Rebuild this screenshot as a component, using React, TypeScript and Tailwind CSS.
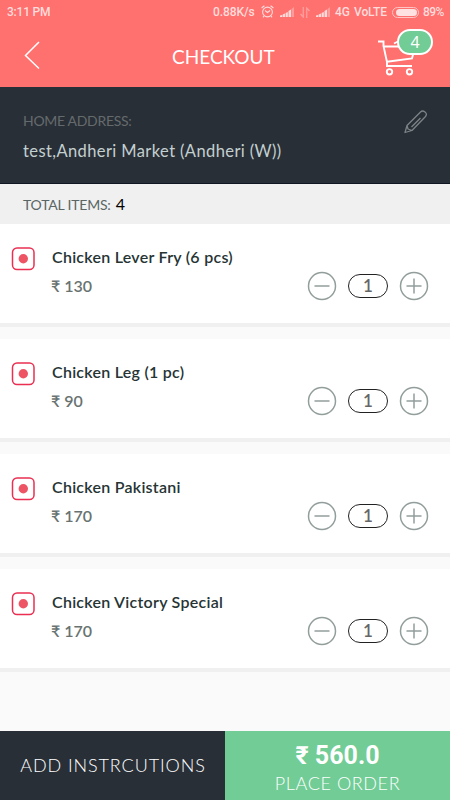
import { ReactNode } from 'react';

type Item = { id: number; name: string; price: number; qty: number };

const items: Item[] = [
  { id: 1, name: 'Chicken Lever Fry (6 pcs)', price: 130, qty: 1 },
  { id: 2, name: 'Chicken Leg (1 pc)', price: 90, qty: 1 },
  { id: 3, name: 'Chicken Pakistani', price: 170, qty: 1 },
  { id: 4, name: 'Chicken Victory Special', price: 170, qty: 1 },
];

function Signal() {
  return (
    <svg width="14" height="10" viewBox="0 0 14 10" fill="currentColor">
      <path d="M0 10V8.5L2.2 8v2zM2.7 10V7.5L5 6.5V10zM5.6 10V6l2.2-1v5zM8.5 10V4L11 2.5V10z" />
      <path d="M11.5 10V2L14 0v10z" opacity="0.4" />
    </svg>
  );
}

function StatusBar() {
  return (
    <div className="flex h-6 items-center pl-[7px] font-['Roboto',sans-serif] text-[12px] font-medium leading-6 text-[#ffdcdc]">
      <span className="w-[206px] tracking-[-0.2px]">3:11 PM</span>
      <span className="w-[48px] whitespace-nowrap tracking-[-0.1px]">0.88K/s</span>
      <svg className="-mt-0.5" width="13" height="13" viewBox="0 0 13 13" fill="none" stroke="currentColor" strokeWidth="1.1">
        <circle cx="6.5" cy="7" r="4.9" />
        <path d="M4 5.5l2.5 2 2.6-2M.6 3L3.4.8M12.4 3L9.6.8M3 11l-1 1.4M10 11l1 1.4" />
      </svg>
      <span className="ml-1.5">
        <Signal />
      </span>
      <svg className="ml-[6px] opacity-40" width="10" height="11" viewBox="0 0 10 11" fill="none" stroke="currentColor" strokeWidth="1.4">
        <path d="M3.3 0v10L.5 7M6.7 11V1l2.8 3" />
      </svg>
      <span className="ml-[6px]">
        <Signal />
      </span>
      <span className="ml-[5px] w-[19px]">4G</span>
      <span className="w-[38px] whitespace-nowrap tracking-[-0.1px]">VoLTE</span>
      <span className="flex h-[11px] w-[27px] rounded-full border border-[#ffc4c4] p-px">
        <span className="ml-[2px] w-[21px] rounded-full bg-[#ffe1e1]" />
      </span>
      <span className="ml-1 tracking-[-0.6px]">89%</span>
    </div>
  );
}

function Cart({ count }: { count: number }) {
  return (
    <div className="relative h-[48px] w-[56px]">
      <svg className="absolute left-0 top-[7px]" width="40" height="38" viewBox="0 0 40 38" fill="none" stroke="#fff" strokeWidth="1.9">
        <path d="M0 2.5h5.5V7L9 23v4h25M6 7.5h16M9 22.800L34 19.500l1.500-6M16 4.500l6-3" />
        <circle cx="11.5" cy="32.8" r="2.7" />
        <circle cx="31.5" cy="32.8" r="2.7" />
      </svg>
      <span className="absolute left-[19px] top-[-3px] flex h-[26px] w-[36px] items-center justify-center rounded-full border-[2.5px] border-white bg-[#71cc96] font-['Noto_Sans',sans-serif] text-[16px] text-white">
        {count}
      </span>
    </div>
  );
}

function Header() {
  return (
    <header className="h-[87px] bg-[#ff716f]">
      <StatusBar />
      <div className="flex h-[63px] items-center pl-[24px]">
        <svg className="-mt-0.5" width="18" height="30" viewBox="0 0 18 30" fill="none" stroke="#fff" strokeWidth="1.5">
          <path d="M15 2L1.5 15.5 15 28.500" />
        </svg>
        <h1 className="ml-[130px] w-[206px] pt-[3px] font-['Lato',sans-serif] text-[19px] text-white">CHECKOUT</h1>
        <Cart count={4} />
      </div>
    </header>
  );
}

function Address() {
  return (
    <section className="flex h-[97px] justify-between border-b border-[#111722] bg-[#292f37] pl-[23px] pr-[22px] font-['Lato',sans-serif]">
      <div>
        <div className="mt-[24px] text-[14px] leading-5 tracking-[-0.3px] text-[#656b6d]">HOME ADDRESS:</div>
        <div className="mt-[8px] text-[16.5px] leading-6 tracking-[0.4px] text-[#c3d0d0]">test,Andheri Market (Andheri (W))</div>
      </div>
      <svg className="mt-[22px]" width="25" height="25" viewBox="0 0 25 25" fill="none" stroke="#7d8386" strokeWidth="1.3" strokeLinejoin="round">
        <path d="M2 23.500l2-7L17.500 3q2-2 4.500 0t.5 4.500L9 21.500zM4 16.500l1 3.500 4 1.500M8.500 18l9-9" />
      </svg>
    </section>
  );
}

function RoundButton({ label, children }: { label: string; children: ReactNode }) {
  return (
    <button aria-label={label} className="h-[30px] w-[30px]">
      <svg width="30" height="30" viewBox="0 0 30 30" fill="none" stroke="#929e9c" strokeWidth="1.5">
        <circle cx="15" cy="15" r="13.5" />
        {children}
      </svg>
    </button>
  );
}

function ItemRow({ item }: { item: Item }) {
  return (
    <li className="mb-[12px] flex h-[103px] border-b-4 border-[#f0f0f0] bg-white pl-[11px] font-['Lato',sans-serif]">
      <svg className="mt-[23px]" width="24" height="24" viewBox="0 0 24 24">
        <rect x="1.5" y="1" width="21.5" height="21.5" rx="4.5" fill="none" stroke="#ea2f52" strokeWidth="1.5" />
        <circle cx="12.3" cy="11.8" r="4.7" fill="#ed5565" />
      </svg>
      <div className="ml-[16px] w-[256px]">
        <div className="ml-px mt-[21px] text-[16px] font-semibold leading-6 tracking-[0.26px] text-[#263434]">{item.name}</div>
        <div className="mt-[5px] text-[16px] font-semibold leading-6 text-[#687371]">₹ {item.price}</div>
      </div>
      <div className="mt-[47px] flex h-[30px] items-center">
        <RoundButton label="Remove one">
          <path d="M7.5 15h15" />
        </RoundButton>
        <span className="mx-[11px] flex h-[24px] w-[40px] items-center justify-center rounded-full border border-[#222] text-[17px] font-semibold text-[#666]">
          {item.qty}
        </span>
        <RoundButton label="Add one">
          <path d="M7.5 15h15M15 7.5v15" />
        </RoundButton>
      </div>
    </li>
  );
}

export default function App() {
  return (
    <div className="flex h-[800px] w-[450px] flex-col overflow-hidden bg-[#fafafa]">
      <Header />
      <Address />
      <div className="flex h-[40px] items-center bg-[#f0f0f0] pl-[23px] font-['Lato',sans-serif] text-[14px] tracking-[-0.2px] text-[#596665]">
        TOTAL ITEMS:
        <span className="ml-[5px] text-[16px] text-black">4</span>
      </div>
      <ul className="flex-1">
        {items.map((item) => (
          <ItemRow key={item.id} item={item} />
        ))}
      </ul>
      {/* Footer actions */}
      <footer className="flex h-[69px] font-['Lato',sans-serif] text-white">
        <button className="w-[225px] bg-[#292f37] pl-px text-[18px] font-light tracking-[0.9px]">ADD INSTRCUTIONS</button>
        <button className="flex w-[225px] flex-col items-center bg-[#71cc96]">
          <span className="mt-[10px] font-['Roboto',sans-serif] text-[25px] font-bold leading-[30px]">₹ 560.0</span>
          <span className="text-[18px] font-light leading-6 tracking-[0.6px]">PLACE ORDER</span>
        </button>
      </footer>
    </div>
  );
}
